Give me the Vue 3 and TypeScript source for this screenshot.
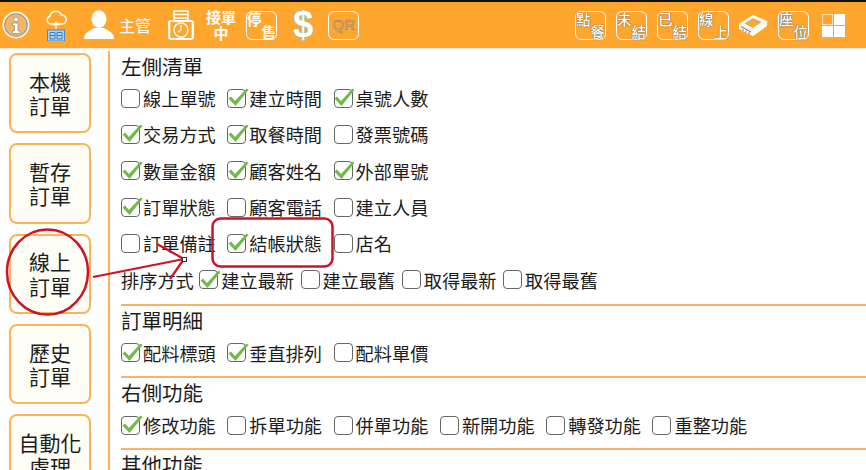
<script setup lang="ts">
interface Opt { label: string; on: boolean }
const nav: string[][] = [['本機', '訂單'], ['暫存', '訂單'], ['線上', '訂單'], ['歷史', '訂單'], ['自動化', '處理']]
const o = (label: string, on = false): Opt => ({ label, on })
const leftRows: Opt[][] = [
  [o('線上單號'), o('建立時間', true), o('桌號人數', true)],
  [o('交易方式', true), o('取餐時間', true), o('發票號碼')],
  [o('數量金額', true), o('顧客姓名', true), o('外部單號', true)],
  [o('訂單狀態', true), o('顧客電話'), o('建立人員')],
  [o('訂單備註'), o('結帳狀態', true), o('店名')],
]
const sortOpts: Opt[] = [o('建立最新', true), o('建立最舊'), o('取得最新'), o('取得最舊')]
const detail: Opt[] = [o('配料標頭', true), o('垂直排列', true), o('配料單價')]
const right: Opt[] = [o('修改功能', true), o('拆單功能'), o('併單功能'), o('新開功能'), o('轉發功能'), o('重整功能')]
const rightBadges: string[][] = [['點', '餐'], ['未', '結'], ['已', '結'], ['線', '上']]
const tick = 'M1.500 10.500l2.500-2 4 4.500L19.500 .5l2 1.500L8.500 18z'
</script>

<template>
  <div class="page">
    <header class="top">
      <svg class="i-info" width="28" height="28" viewBox="0 0 28 28">
        <circle cx="14" cy="14" r="12.500" fill="#f6b565" stroke="#f4f1e6" stroke-width="2" />
        <circle cx="14" cy="14" r="11.200" fill="none" stroke="#8fa3ad" stroke-width="1.200" />
        <circle cx="14" cy="8.500" r="2.300" fill="#fff" stroke="#7f8d96" stroke-width=".7" />
        <path d="M10.500 12h5.500v8h2v2.500h-7.500V20h2v-5.500h-2z" fill="#fff" stroke="#7f8d96" stroke-width=".7" />
      </svg>
      <svg class="i-cloud" width="22" height="32" viewBox="0 0 22 32">
        <path d="M6 15a4 4 0 0 1-1-7.800 6 6 0 0 1 11.500-1.200 4.500 4.500 0 0 1 .5 9z" fill="none" stroke="#fff" stroke-width="1.500" />
        <path d="M11 20v-6M8.500 16.500l2.500-3 2.500 3" fill="none" stroke="#fff" stroke-width="1.400" />
        <rect x="2.500" y="21" width="17" height="11" fill="#a9d3f3" stroke="#4d8ccc" />
        <path d="M5 23.500h5v6.500H5zM12 23.500h5v6.500h-5zM5 26.500h5M12 26.500h5" fill="none" stroke="#2f6cae" stroke-width=".8" />
      </svg>
      <svg class="i-user" width="30" height="30" viewBox="0 0 30 30">
        <ellipse cx="15" cy="9" rx="7.500" ry="9" fill="#fff" />
        <path d="M0 29c0-7 6-8 10-11h10c4 3 10 4 10 11z" fill="#fff" />
      </svg>
      <span class="sup">主管</span>
      <svg class="i-timer" width="26" height="30" viewBox="0 0 26 30">
        <path d="M6 11V1h14v10M6 4.500h14M6 8h14" fill="none" stroke="#fff" stroke-width="1.600" />
        <rect x="1.200" y="11" width="23.600" height="18" rx="2" fill="none" stroke="#fff" stroke-width="2.200" />
        <circle cx="13" cy="20" r="7" fill="none" stroke="#fff" stroke-width="1.300" />
        <path d="M13 15v5l-3 2" fill="none" stroke="#fff" stroke-width="1.200" />
      </svg>
      <span class="taking">接單<br />中</span>
      <span class="badge stop"><b>停</b><b>售</b></span>
      <span class="dollar">$</span>
      <span class="qr">QR</span>
      <div class="spring"></div>
      <span v-for="b in rightBadges" :key="b.join('')" class="badge r"><b>{{ b[0] }}</b><b>{{ b[1] }}</b></span>
      <svg class="i-drawer" width="30" height="22" viewBox="0 0 30 22">
        <path d="M1 10 15 1l14 6-14 10z" fill="#fff" />
        <path d="M7 9.500 15 4.500l8 3.500-8 5.500z" fill="#ffa62f" stroke="#b9a98c" stroke-width=".7" />
        <path d="M1 10v5l14 7 14-10V7L15 17z" fill="#fff" />
        <path d="M3 12.500l10 5.500M5 15v2M8 16.500v2M11 18v2" stroke="#8a8a80" stroke-width="1.100" fill="none" />
      </svg>
      <span class="badge seat"><b>座</b><b>位</b></span>
      <div class="tiles"><i class="hollow"></i><i></i><i></i><i></i></div>
    </header>

    <div class="body">
      <nav class="side">
        <button v-for="n in nav" :key="n.join('')" class="nav-btn" type="button">
          <span>{{ n[0] }}</span><span>{{ n[1] }}</span>
        </button>
      </nav>
      <main class="content">
        <h2 class="title head">左側清單</h2>
        <div v-for="(row, i) in leftRows" :key="i" class="row">
          <label v-for="c in row" :key="c.label" class="opt">
            <span class="box"><svg v-if="c.on" width="23" height="19" viewBox="0 0 23 19"><path :d="tick" fill="#6fbb49" /></svg></span>{{ c.label }}
          </label>
        </div>
        <div class="row sort">
          <span class="sort-label">排序方式</span>
          <label v-for="c in sortOpts" :key="c.label" class="opt auto">
            <span class="box"><svg v-if="c.on" width="23" height="19" viewBox="0 0 23 19"><path :d="tick" fill="#6fbb49" /></svg></span>{{ c.label }}
          </label>
        </div>
        <hr class="rule" />
        <h2 class="title">訂單明細</h2>
        <div class="row">
          <label v-for="c in detail" :key="c.label" class="opt">
            <span class="box"><svg v-if="c.on" width="23" height="19" viewBox="0 0 23 19"><path :d="tick" fill="#6fbb49" /></svg></span>{{ c.label }}
          </label>
        </div>
        <hr class="rule tight" />
        <h2 class="title">右側功能</h2>
        <div class="row">
          <label v-for="c in right" :key="c.label" class="opt">
            <span class="box"><svg v-if="c.on" width="23" height="19" viewBox="0 0 23 19"><path :d="tick" fill="#6fbb49" /></svg></span>{{ c.label }}
          </label>
        </div>
        <hr class="rule tight" />
        <h2 class="title">其他功能</h2>
      </main>
    </div>

    <svg class="marks" width="866" height="470" viewBox="0 0 866 470">
      <ellipse cx="47.500" cy="272" rx="40.500" ry="42.500" fill="none" stroke="#cc1424" stroke-width="2.500" />
      <rect x="212.500" y="218.500" width="120" height="48" rx="8" fill="none" stroke="#cc1424" stroke-width="2.500" />
      <path d="M93 277 184 259M157 244l27 15M170 279l14-20" fill="none" stroke="#cc1424" stroke-width="2.200" />
      <rect x="182.500" y="257.500" width="4" height="4" fill="#fff" stroke="#333" stroke-width="1" />
    </svg>
  </div>
</template>

<style>
html, body { margin: 0; background: #fff; }
</style>

<style scoped>
.page {
  position: relative;
  width: 866px;
  height: 470px;
  overflow: hidden;
  background: #fff;
  font-family: "Noto Sans CJK TC", "Liberation Sans", sans-serif;
  color: #1c1c1c;
}
.top {
  box-sizing: border-box;
  height: 48px;
  border-top: 2px solid #111;
  background: #ffa62f;
  box-shadow: 0 1px 2px rgba(0, 0, 0, .12);
  display: flex;
  align-items: center;
  color: #fff;
  padding-left: 2px;
}
.i-info { margin-left: 0; flex: none; }
.i-cloud { margin-left: 15px; flex: none; }
.i-user { margin-left: 17px; flex: none; }
.sup { margin-left: 5px; font-size: 16px; width: 32px; white-space: nowrap; flex: none; }
.i-timer { margin-left: 17px; flex: none; }
.taking { margin-left: 11px; width: 32px; flex: none; font-size: 15px; line-height: 16px; font-weight: 700; text-align: center; }
.badge {
  box-sizing: border-box;
  width: 31px;
  height: 29px;
  border: 1.500px solid #fff;
  border-radius: 6px;
  position: relative;
  display: block;
  flex: none;
}
.badge b {
  position: absolute;
  font-size: 14.500px;
  line-height: 14px;
  font-weight: 500;
  color: #fff;
  text-shadow: 0 0 1px #555, 0 0 1px #555;
}
.badge b:first-child { left: 0; top: 0; }
.badge b:last-child { right: 0; bottom: 0; }
.stop { margin-left: 9px; }
.stop b { text-shadow: none; font-weight: 700; }
.dollar { margin-left: 15px; width: 22px; flex: none; font: 700 36px/1 "Liberation Sans", sans-serif; color: #fff; text-shadow: 0 0 2px #6fd3d6, 0 0 1px #6fd3d6; text-align: center; }
.qr {
  box-sizing: border-box;
  margin-left: 14px;
  width: 31px;
  height: 29px;
  flex: none;
  border: 1.500px solid #fff;
  border-radius: 6px;
  font: 15px/26px "Liberation Sans", sans-serif;
  text-align: center;
  color: #ffc27a;
  -webkit-text-stroke: .6px #8d8068;
}
.spring { flex: 1; }
.r { margin-right: 10px; }
.i-drawer { margin-right: 10px; margin-left: -1px; flex: none; }
.seat { margin-right: 13px; }
.tiles {
  width: 23px;
  height: 23px;
  flex: none;
  margin-right: 21px;
  display: grid;
  grid-template-columns: 1fr 1fr;
  grid-template-rows: 1fr 1fr;
  gap: 1px;
}
.tiles i { background: #fff; display: block; }
.tiles .hollow { background: transparent; box-shadow: inset 0 0 0 1px #ffd9a6; }

.body { display: flex; height: 422px; }
.side {
  box-sizing: border-box;
  width: 108px;
  flex: none;
  padding: 5px 0 0 9px;
  display: flex;
  flex-direction: column;
  gap: 10px;
}
.nav-btn {
  box-sizing: border-box;
  flex: none;
  width: 82px;
  height: 80.300px;
  padding: 0;
  border: 2px solid #fbb45a;
  border-radius: 8px;
  background: #fffef6;
  display: flex;
  flex-direction: column;
  align-items: center;
  justify-content: center;
  font: 400 21px/24.500px "Noto Sans CJK TC", sans-serif;
  color: #1c1c1c;
}
.content {
  flex: 1;
  min-width: 0;
  margin-top: 3px;
  border-left: 2px solid #f9b263;
  padding-left: 11px;
}
.title { margin: -1px 0 0; font: 400 20.500px/30px "Noto Sans CJK TC", sans-serif; height: 30px; }
.head { margin-top: 0; height: 29px; }
.row { display: flex; align-items: center; height: 36.300px; font-size: 18.200px; white-space: nowrap; }
.opt { display: flex; align-items: center; width: 106.300px; flex: none; }
.opt.auto { width: auto; margin-right: 6.500px; }
.box {
  box-sizing: border-box;
  position: relative;
  width: 19px;
  height: 19px;
  margin-right: 3px;
  flex: none;
  border: 1.200px solid #666;
  border-radius: 4px;
  background: #fff;
}
.box svg { position: absolute; left: -1.500px; top: -1.500px; }
.sort-label { margin-right: 5.500px; }
.rule { margin: 6px 0 0; height: 0; border: 0; border-top: 2px solid #f9b26a; }
.rule.tight { margin-top: 5px; }
.marks { position: absolute; left: 0; top: 0; pointer-events: none; }
</style>
